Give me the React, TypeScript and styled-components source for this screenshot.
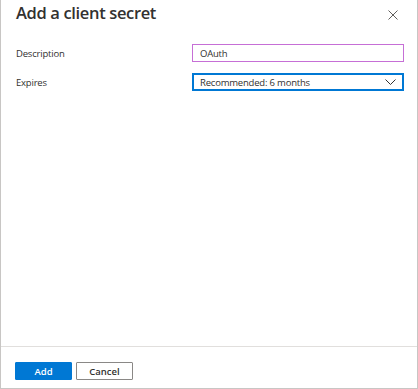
import styled, { createGlobalStyle } from "styled-components";

const GlobalStyle = createGlobalStyle`
  html, body {
    margin: 0;
    padding: 0;
    background: #ffffff;
  }
  body {
    font-family: "Open Sans", "Noto Sans", "Liberation Sans", sans-serif;
    color: #323130;
  }
`;

const Panel = styled.div`
  box-sizing: border-box;
  width: 418px;
  height: 389px;
  display: flex;
  flex-direction: column;
  border-left: 1px solid #c8c6c4;
  border-right: 1px solid #c8c6c4;
  border-bottom: 1px solid #c8c6c4;
  background: #ffffff;
`;

const Header = styled.div`
  display: flex;
  align-items: flex-start;
  justify-content: space-between;
  padding: 1px 19px 0 15px;
  height: 30px;
`;

const Title = styled.h1`
  margin: 0;
  font-size: 16.5px;
  font-weight: 600;
  line-height: 24px;
  color: #323130;
  letter-spacing: -0.35px;
`;

const CloseButton = styled.button`
  margin-top: 8px;
  width: 11px;
  height: 11px;
  padding: 0;
  border: none;
  background: transparent;
  display: flex;
  align-items: center;
  justify-content: center;
  cursor: pointer;
`;

const Body = styled.div`
  flex: 1;
  padding: 13px 13px 0 15px;
`;

const FormGrid = styled.div`
  display: grid;
  grid-template-columns: 176px 1fr;
  row-gap: 11px;
  align-items: center;
`;

const Label = styled.label`
  font-size: 9.5px;
  letter-spacing: -0.2px;
  color: #323130;
`;

const Field = styled.div<{ $accent: string; $thick?: boolean }>`
  box-sizing: border-box;
  height: 18px;
  display: flex;
  align-items: center;
  justify-content: space-between;
  padding: 0 7px 0 7px;
  border: 1px solid ${(p) => p.$accent};
  outline: ${(p) => (p.$thick ? `1px solid ${p.$accent}` : "none")};
  outline-offset: -2px;
  font-size: 9.5px;
  letter-spacing: -0.2px;
  color: #323130;
  background: #ffffff;
`;

const Footer = styled.div`
  border-top: 1px solid #e1dfdd;
  display: flex;
  gap: 4px;
  padding: 15px 15px 8px 14px;
`;

const Button = styled.button<{ $primary?: boolean }>`
  box-sizing: border-box;
  width: 57px;
  height: 18px;
  padding: 0;
  font-family: inherit;
  font-size: 9.5px;
  font-weight: 600;
  border-radius: 1px;
  border: 1px solid ${(p) => (p.$primary ? "#0078d4" : "#8a8886")};
  background: ${(p) => (p.$primary ? "#0078d4" : "#ffffff")};
  color: ${(p) => (p.$primary ? "#ffffff" : "#323130")};
  cursor: pointer;
`;

export default function App() {
  return (
    <>
      <GlobalStyle />
      <Panel>
        <Header>
          <Title>Add a client secret</Title>
          <CloseButton aria-label="Close">
            <svg width="10" height="10" viewBox="0 0 10 10">
              <path d="M0.5 0.5 L9.5 9.5 M9.5 0.5 L0.5 9.5" stroke="#605e5c" strokeWidth="1" fill="none" />
            </svg>
          </CloseButton>
        </Header>
        <Body>
          <FormGrid>
            <Label>Description</Label>
            <Field $accent="#c66fd6">OAuth</Field>
            <Label>Expires</Label>
            <Field $accent="#0078d4" $thick>
              <span>Recommended: 6 months</span>
              <svg width="11" height="6" viewBox="0 0 11 6">
                <path d="M0.5 0.5 L5.5 5.5 L10.5 0.5" stroke="#323130" strokeWidth="1" fill="none" />
              </svg>
            </Field>
          </FormGrid>
        </Body>
        <Footer>
          <Button $primary>Add</Button>
          <Button>Cancel</Button>
        </Footer>
      </Panel>
    </>
  );
}
